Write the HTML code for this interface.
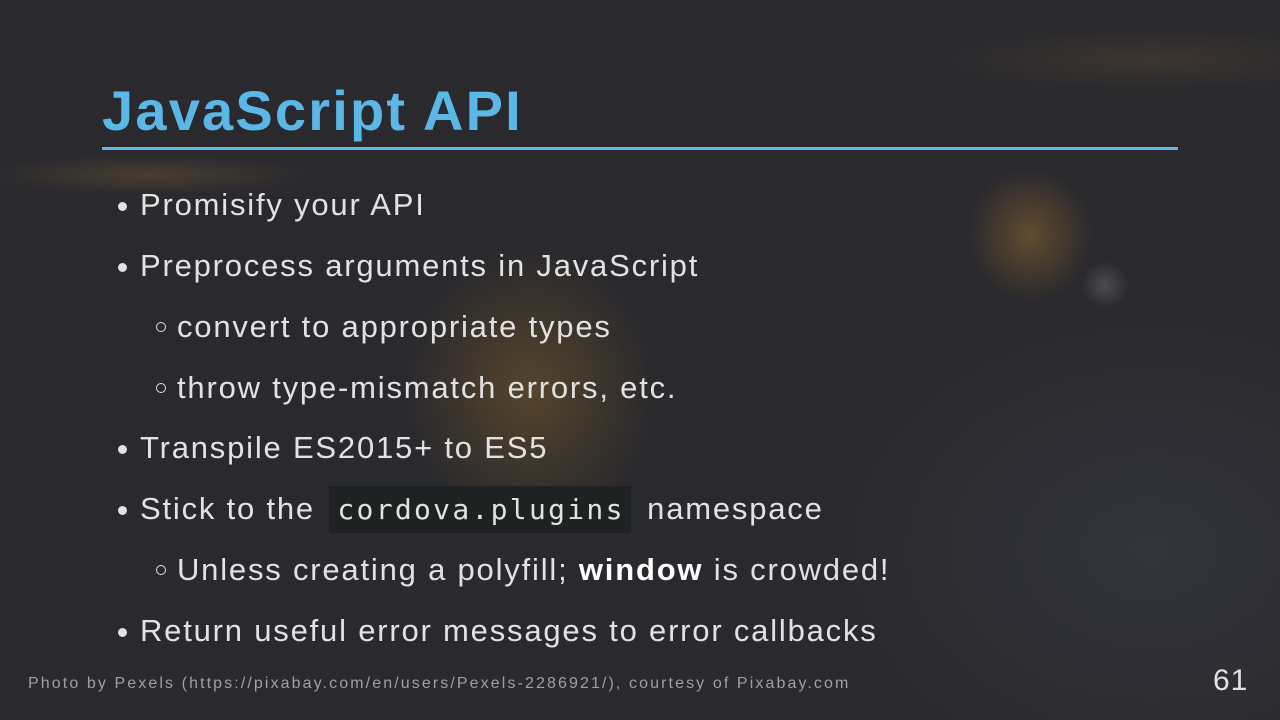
<!DOCTYPE html>
<html><head><style>
html,body{margin:0;padding:0}
body{width:1280px;height:720px;overflow:hidden;position:relative;font-family:"Liberation Sans",sans-serif;
background:
radial-gradient(ellipse 90px 95px at 1030px 235px,rgba(200,140,50,0.35),transparent 70%),
radial-gradient(circle 30px at 1105px 285px,rgba(140,140,150,0.35),transparent 80%),
radial-gradient(ellipse 160px 180px at 530px 390px,rgba(150,110,40,0.4),transparent 78%),
radial-gradient(ellipse 260px 40px at 1150px 60px,rgba(120,90,50,0.25),transparent 80%),
radial-gradient(ellipse 200px 25px at 150px 175px,rgba(140,110,60,0.3),transparent 80%),
radial-gradient(ellipse 400px 300px at 1150px 550px,rgba(60,65,75,0.5),transparent 80%),
#2a292d;}
h1{position:absolute;left:102px;top:78px;margin:0;font-size:56px;font-weight:bold;color:#5bb8e6;letter-spacing:2.2px}
.rule{position:absolute;left:102px;top:147px;width:1076px;height:3px;background:#5bb8e6}
.l{position:absolute;font-size:31px;color:#e2e2e2;white-space:nowrap;line-height:36px;letter-spacing:1.8px}
.b::before{content:"";position:absolute;left:-22px;top:15px;width:9px;height:9px;border-radius:50%;background:#e2e2e2}
.s::before{content:"";position:absolute;left:-21px;top:13px;width:8px;height:8px;border-radius:50%;border:1.5px solid #e2e2e2}
code{font-family:"DejaVu Sans Mono","Liberation Mono",monospace;font-size:28px;letter-spacing:2.3px;background:#1e2223;padding:7px 6px 7px 8px;margin:0 6px 0 4px}
.foot{position:absolute;left:28px;top:675px;font-size:16px;color:#a0a0a0;letter-spacing:2.1px}
.num{position:absolute;left:1213px;top:664px;font-size:30px;color:#e2e2e2;letter-spacing:1px}
</style></head><body>
<h1>JavaScript API</h1>
<div class="rule"></div>
<div class="l b" style="left:140px;top:187px">Promisify your API</div>
<div class="l b" style="left:140px;top:248px">Preprocess arguments in JavaScript</div>
<div class="l s" style="left:177px;top:309px">convert to appropriate types</div>
<div class="l s" style="left:177px;top:370px">throw type-mismatch errors, etc.</div>
<div class="l b" style="left:140px;top:430px">Transpile ES2015+ to ES5</div>
<div class="l b" style="left:140px;top:491px">Stick to the <code>cordova.plugins</code> namespace</div>
<div class="l s" style="left:177px;top:552px">Unless creating a polyfill; <b style="color:#fff">window</b> is crowded!</div>
<div class="l b" style="left:140px;top:613px">Return useful error messages to error callbacks</div>
<div class="foot">Photo by Pexels (https://pixabay.com/en/users/Pexels-2286921/), courtesy of Pixabay.com</div>
<div class="num">61</div>
</body></html>
